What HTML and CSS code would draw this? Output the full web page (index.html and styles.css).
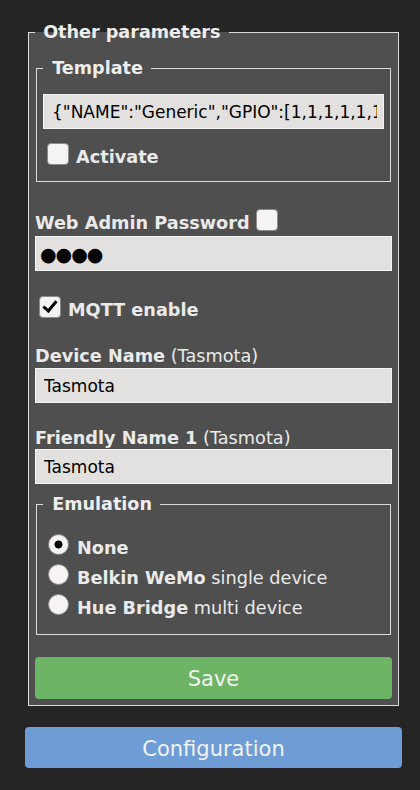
FILE: index.html
```html
<!DOCTYPE html>
<html>
<head>
<meta charset="utf-8">
<link rel="stylesheet" href="styles.css">
</head>
<body>
<div class="page">
  <form class="form">
    <fieldset class="outer">
      <legend class="lg">&nbsp;Other parameters&nbsp;</legend>
      <fieldset class="inner tpl">
        <legend class="lg">&nbsp;Template&nbsp;</legend>
        <input class="field" type="text" value='{"NAME":"Generic","GPIO":[1,1,1,1,1,1,1,1,1,1,1,1,1,1],"FLAG":0,"BASE":18}'>
        <label class="row act"><input class="cb" type="checkbox"><b>Activate</b></label>
      </fieldset>
      <label class="row pw"><b>Web Admin Password</b><input class="cb cb-r" type="checkbox"></label>
      <input class="field pwfield" type="text" value="●●●●">
      <label class="row mqtt"><input class="cb" type="checkbox" checked><b>MQTT enable</b></label>
      <label class="lbl dn"><b>Device Name</b> (Tasmota)</label>
      <input class="field f2" type="text" value="Tasmota">
      <label class="lbl fn"><b>Friendly Name 1</b> (Tasmota)</label>
      <input class="field f1" type="text" value="Tasmota">
      <fieldset class="inner emu">
        <legend class="lg">&nbsp;Emulation&nbsp;</legend>
        <label class="rrow"><input class="rd" type="radio" name="e" checked><span class="rt"><b>None</b></span></label>
        <label class="rrow"><input class="rd" type="radio" name="e"><span class="rt"><b>Belkin WeMo</b> single device</span></label>
        <label class="rrow"><input class="rd" type="radio" name="e"><span class="rt"><b>Hue Bridge</b> multi device</span></label>
      </fieldset>
      <button type="button" class="btn save">Save</button>
    </fieldset>
  </form>
  <button type="button" class="btn cfg">Configuration</button>
</div>
</body>
</html>
```
FILE: styles.css
```css
html, body {
  margin: 0;
  padding: 0;
  background: #252525;
}
body {
  font-family: "DejaVu Sans", Verdana, sans-serif;
  color: #eaeaea;
  font-size: 17.7px;
  line-height: 20px;
}
.page {
  padding: 22px 18px 0 25px;
}
.form {
  margin: 0;
}
fieldset {
  margin: 0;
  min-width: 0;
}
.outer {
  margin: 0 3px;
  border: 1px solid #dcdcdc;
  background: #4f4f4f;
  padding: 16px 6px 6px;
  display: flex;
  flex-direction: column;
}
.lg {
  font-weight: bold;
  font-size: 17.6px;
  line-height: 20px;
  padding: 0 2px 0 2px;
  color: #eeeeee;
}
.inner {
  margin: 0 1px;
  border: 1px solid #dcdcdc;
  padding: 16px 6px 14px;
}
.inner .lg {
  padding-left: 3px;
}
.field {
  display: block;
  box-sizing: border-box;
  width: 100%;
  height: 35px;
  margin: 0;
  border: 1px solid #f4f4f4;
  background: #e3e1df;
  color: #000;
  font-family: "DejaVu Sans", Verdana, sans-serif;
  font-size: 17px;
  padding: 0 6px 0 8px;
  outline: none;
}
.row {
  display: flex;
  align-items: flex-end;
}
.cb {
  appearance: none;
  -webkit-appearance: none;
  width: 22px;
  height: 22px;
  box-sizing: border-box;
  margin: 0 7px 2px 4px;
  border: 1px solid #8c8c8c;
  border-radius: 4px;
  background: #f6f4f2;
  position: relative;
  flex: none;
}
.cb-r {
  margin: 0 0 2px 6px;
}
.cb:checked::after {
  content: "";
  position: absolute;
  left: 6px;
  top: 1px;
  width: 5px;
  height: 11px;
  border-right: 3px solid #000;
  border-bottom: 3px solid #000;
  transform: rotate(40deg);
}
.act {
  margin-top: 14px;
}
.pw {
  margin-top: 27px;
}
.pwfield {
  margin-top: 3px;
  font-size: 19px;
  letter-spacing: -1px;
  padding-left: 4px;
}
.mqtt {
  margin-top: 25px;
}
.lbl {
  display: block;
}
.dn {
  margin-top: 26px;
}
.f2 {
  margin-top: 2px;
}
.fn {
  margin-top: 25px;
}
.f1 {
  margin-top: 1px;
}
.emu {
  margin-top: 10px;
  padding: 15px 6px 15px;
}
.rrow {
  display: flex;
  align-items: flex-end;
  height: 30px;
}
.rd {
  appearance: none;
  -webkit-appearance: none;
  width: 21px;
  height: 21px;
  box-sizing: border-box;
  margin: 5px 8px 4px 5px;
  border: 1px solid #8c8c8c;
  border-radius: 50%;
  background: #f6f4f2;
  flex: none;
}
.rd:checked {
  background: radial-gradient(circle, #000 0 3.6px, #f6f4f2 4.4px);
}
.rt {
  margin-bottom: 1px;
}
.btn {
  display: block;
  box-sizing: border-box;
  width: 100%;
  border: 0;
  border-radius: 4px;
  color: #f2f2f2;
  font-family: "DejaVu Sans", Verdana, sans-serif;
  font-size: 21px;
  padding: 2px 0 0;
}
.save {
  margin-top: 22px;
  height: 42px;
  background: #6db564;
}
.cfg {
  margin-top: 21px;
  height: 41px;
  background: #6e9dd6;
}
```
